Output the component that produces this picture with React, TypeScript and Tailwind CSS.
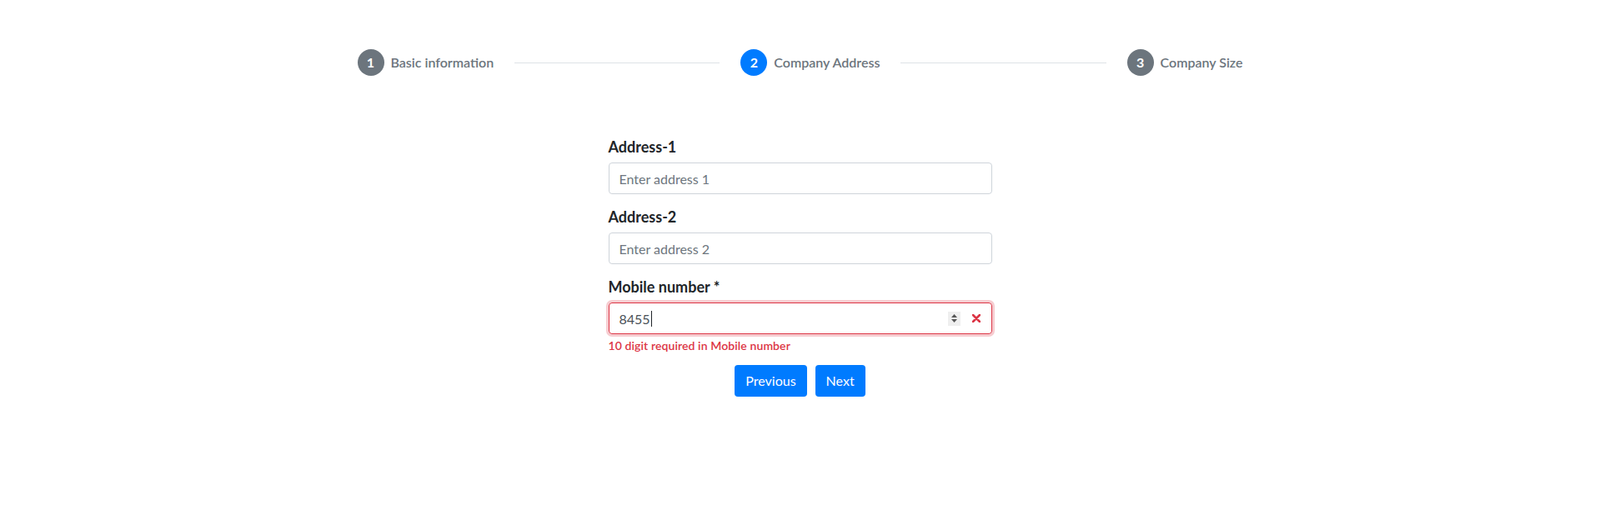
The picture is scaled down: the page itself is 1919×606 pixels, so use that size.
import { Fragment } from "react";

const steps = [
  { num: 1, label: "Basic information", active: false },
  { num: 2, label: "Company Address", active: true },
  { num: 3, label: "Company Size", active: false },
];

export default function App() {
  return (
    <div className="min-h-screen bg-white font-['Lato','Noto_Sans',sans-serif] text-[#212529]">
      {/* Stepper */}
      <div className="flex justify-center pt-[59px]">
        <div className="flex w-[1062px] items-center">
          {steps.map((step, i) => (
            <Fragment key={step.num}>
              {i > 0 && <div className="mx-[25px] h-px flex-1 bg-[#dee2e6]" />}
              <div className="flex items-center gap-[8px]">
                <span
                  className={`flex h-8 w-8 items-center justify-center rounded-full text-[16px] font-bold text-white ${
                    step.active ? "bg-[#007bff]" : "bg-[#6c757d]"
                  }`}
                >
                  {step.num}
                </span>
                <span className="text-[16px] font-semibold text-[#6c757d]">{step.label}</span>
              </div>
            </Fragment>
          ))}
        </div>
      </div>

      {/* Form */}
      <form className="mx-auto mt-[72px] w-[460px]">
        <div className="mb-[14px]">
          <label className="mb-[5px] block text-[18px] font-bold leading-[27px]">Address-1</label>
          <input
            type="text"
            placeholder="Enter address 1"
            className="block h-[38px] w-full rounded border border-[#ced4da] px-3 text-[16px] text-[#495057] outline-none placeholder:text-[#6c757d]"
          />
        </div>
        <div className="mb-[14px]">
          <label className="mb-[5px] block text-[18px] font-bold leading-[27px]">Address-2</label>
          <input
            type="text"
            placeholder="Enter address 2"
            className="block h-[38px] w-full rounded border border-[#ced4da] px-3 text-[16px] text-[#495057] outline-none placeholder:text-[#6c757d]"
          />
        </div>
        <div>
          <label className="mb-[5px] block text-[18px] font-bold leading-[27px]">Mobile number *</label>
          <div className="flex h-[38px] w-full items-center rounded border border-[#dc3545] pl-3 pr-[13px] shadow-[0_0_0_3px_rgba(220,53,69,0.25)]">
            <span className="flex-1 text-[16px] text-[#495057]">
              8455<span className="ml-px inline-block h-[19px] w-px translate-y-[3px] bg-[#212529]" />
            </span>
            <span className="flex h-[17px] w-[15px] flex-col items-center justify-center gap-[2px] bg-[#efefef]">
              <svg width="7" height="4" viewBox="0 0 7 4">
                <path d="M0 4 L3.5 0 L7 4 Z" fill="#555" />
              </svg>
              <svg width="7" height="4" viewBox="0 0 7 4">
                <path d="M0 0 L7 0 L3.5 4 Z" fill="#555" />
              </svg>
            </span>
            <svg className="ml-[14px]" width="10" height="10" viewBox="0 0 10 10">
              <path d="M1 1 L9 9 M9 1 L1 9" stroke="#dc3545" strokeWidth="2.6" strokeLinecap="round" />
            </svg>
          </div>
          <div className="mt-[3px] text-[14px] font-semibold tracking-[0.1px] text-[#dc3545]">
            10 digit required in Mobile number
          </div>
        </div>
        <div className="mt-[13px] flex justify-center gap-[10px]">
          <button
            type="button"
            className="h-[38px] rounded bg-[#007bff] px-[13px] text-[16px] text-white"
          >
            Previous
          </button>
          <button
            type="button"
            className="h-[38px] rounded bg-[#007bff] px-[13px] text-[16px] text-white"
          >
            Next
          </button>
        </div>
      </form>
    </div>
  );
}
